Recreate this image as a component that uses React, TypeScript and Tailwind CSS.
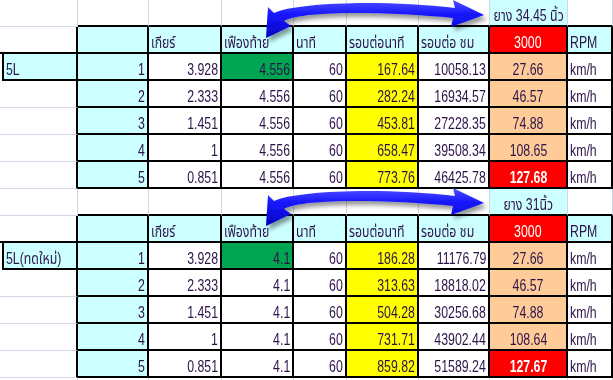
import React from "react";

type Side = "k" | "g";
type Al = "l" | "r" | "c";

const WC = [
  "w-[78px]",
  "w-[71px]",
  "w-[73px]",
  "w-[72px]",
  "w-[53px]",
  "w-[72px]",
  "w-[71px]",
  "w-[78px]",
  "w-[45px]",
];

const CYAN = "bg-[#ccffff]";
const YEL = "bg-[#ffff00]";
const GRN = "bg-[#00a651]";
const PEACH = "bg-[#ffcc99]";
const RED = "bg-[#ff0000]";
const WHITE = "bg-white";

function Cell({
  i,
  bg = WHITE,
  r = "g",
  b = "g",
  al = "l",
  t,
  white,
  bold,
}: {
  i: number;
  bg?: string;
  r?: Side;
  b?: Side;
  al?: Al;
  t?: string;
  white?: boolean;
  bold?: boolean;
}) {
  const rCls = r === "k" ? "border-r-2 border-r-black" : "border-r border-r-[#d0d7e5]";
  const bCls = b === "k" ? "border-b-2 border-b-black" : "border-b border-b-[#d0d7e5]";
  const jCls = al === "r" ? "justify-end pr-[2px]" : al === "c" ? "justify-center" : "justify-start pl-[2px]";
  const oCls = al === "r" ? "origin-right" : al === "c" ? "origin-center" : "origin-left";
  return (
    <div className={`${WC[i]} shrink-0 h-full flex items-end ${jCls} ${bg} ${rCls} ${bCls}`}>
      {t !== undefined && (
        <span
          className={`inline-block whitespace-nowrap text-[16px] leading-[18px] scale-x-[0.77] ${oCls} ${
            white ? "text-white" : "text-[#2d1448]"
          } ${bold ? "font-bold" : "font-normal"}`}
        >
          {t}
        </span>
      )}
    </div>
  );
}

type TableData = {
  tire: string;
  label: string;
  d: string;
  f: string[];
  g: string[];
  h: string[];
};

const gears = ["3.928", "2.333", "1.451", "1", "0.851"];

function Table({ data }: { data: TableData }) {
  return (
    <>
      {/* tire label row */}
      <div className="flex h-[27px]">
        <Cell i={0} />
        <Cell i={1} b="k" />
        <Cell i={2} b="k" />
        <Cell i={3} b="k" />
        <Cell i={4} b="k" />
        <Cell i={5} b="k" />
        <Cell i={6} b="k" />
        <Cell i={7} b="k" bg={CYAN} al="c" t={data.tire} />
        <Cell i={8} b="k" />
      </div>
      {/* header row */}
      <div className="flex h-[27px]">
        <Cell i={0} r="k" b="k" />
        <Cell i={1} r="k" b="k" bg={CYAN} />
        <Cell i={2} r="k" b="k" bg={CYAN} t="เกียร์" />
        <Cell i={3} r="k" b="k" bg={CYAN} t="เฟืองท้าย" />
        <Cell i={4} r="k" b="k" bg={CYAN} t="นาที" />
        <Cell i={5} r="k" b="k" bg={CYAN} t="รอบต่อนาที" />
        <Cell i={6} r="k" b="k" bg={CYAN} t="รอบต่อ ชม" />
        <Cell i={7} r="k" b="k" bg={RED} al="c" t="3000" white />
        <Cell i={8} r="k" b="k" bg={CYAN} t="RPM" />
      </div>
      {gears.map((gr, n) => (
        <div key={n} className="flex h-[27px]">
          {n === 0 ? (
            <div className="ml-[2px] w-[76px] shrink-0 h-full flex items-end justify-start pl-[2px] bg-[#ccffff] border-l-2 border-l-black border-r-2 border-r-black border-b-2 border-b-black">
              <span className="inline-block whitespace-nowrap text-[16px] leading-[18px] scale-x-[0.77] origin-left text-[#2d1448]">
                {data.label}
              </span>
            </div>
          ) : (
            <Cell i={0} r="k" b="g" />
          )}
          <Cell i={1} r="k" b="k" bg={CYAN} al="r" t={String(n + 1)} />
          <Cell i={2} r="k" b="k" al="r" t={gr} />
          <Cell i={3} r="k" b="k" bg={n === 0 ? GRN : WHITE} al="r" t={data.d} />
          <Cell i={4} r="k" b="k" al="r" t="60" />
          <Cell i={5} r="k" b="k" bg={YEL} al="r" t={data.f[n]} />
          <Cell i={6} r="k" b="k" al="r" t={data.g[n]} />
          {n === 4 ? (
            <Cell i={7} r="k" b="k" bg={RED} al="c" t={data.h[n]} white bold />
          ) : (
            <Cell i={7} r="k" b="k" bg={PEACH} al="c" t={data.h[n]} />
          )}
          <Cell i={8} r="k" b="k" t="km/h" />
        </div>
      ))}
    </>
  );
}

const T1: TableData = {
  tire: "ยาง 34.45 นิ้ว",
  label: "5L",
  d: "4.556",
  f: ["167.64", "282.24", "453.81", "658.47", "773.76"],
  g: ["10058.13", "16934.57", "27228.35", "39508.34", "46425.78"],
  h: ["27.66", "46.57", "74.88", "108.65", "127.68"],
};

const T2: TableData = {
  tire: "ยาง 31นิ้ว",
  label: "5L(ทดใหม่)",
  d: "4.1",
  f: ["186.28", "313.63", "504.28", "731.71", "859.82"],
  g: ["11176.79", "18818.02", "30256.68", "43902.44", "51589.24"],
  h: ["27.66", "46.57", "74.88", "108.64", "127.67"],
};

const ARROW =
  "M 274 13 C 295 3, 380 -1, 455 8 L 453 0 L 484 15 L 451 27 L 453 18 C 390 12, 305 10, 284 21 L 291 26 L 266 38 L 268 7 Z";

export default function App() {
  return (
    <div className="relative w-[613px] h-[380px] overflow-hidden bg-white font-['Liberation_Sans','Noto_Sans_Thai','Tahoma',sans-serif]">
      <div className="flex flex-col">
        <Table data={T1} />
        <Table data={T2} />
        <div className="flex h-[2px]">
          {WC.map((w, i) => (
            <div key={i} className={`${w} shrink-0 h-full border-r border-r-[#d0d7e5]`} />
          ))}
        </div>
      </div>
      <svg className="absolute inset-0 pointer-events-none" width="613" height="380" viewBox="0 0 613 380">
        <defs>
          <linearGradient id="ag" x1="0" y1="0" x2="0" y2="1">
            <stop offset="0" stopColor="#5050ff" />
            <stop offset="0.35" stopColor="#1a1aff" />
            <stop offset="1" stopColor="#0000c0" />
          </linearGradient>
          <filter id="sh" x="-10%" y="-50%" width="130%" height="250%">
            <feDropShadow dx="3" dy="4" stdDeviation="2" floodColor="#000" floodOpacity="0.4" />
          </filter>
        </defs>
        <path d={ARROW} fill="url(#ag)" filter="url(#sh)" />
        <g transform="translate(0,188)">
          <path d={ARROW} fill="url(#ag)" filter="url(#sh)" />
        </g>
      </svg>
    </div>
  );
}
